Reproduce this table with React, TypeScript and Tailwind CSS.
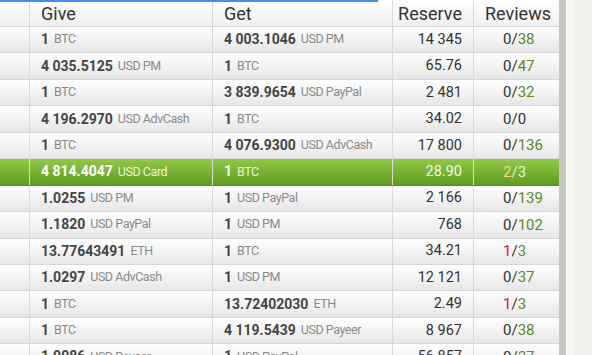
type Row = {
  give: [string, string];
  get: [string, string];
  reserve: string;
  neg: number;
  pos: number;
  active?: boolean;
};

const rows: Row[] = [
  { give: ["1", "BTC"], get: ["4 003.1046", "USD PM"], reserve: "14 345", neg: 0, pos: 38 },
  { give: ["4 035.5125", "USD PM"], get: ["1", "BTC"], reserve: "65.76", neg: 0, pos: 47 },
  { give: ["1", "BTC"], get: ["3 839.9654", "USD PayPal"], reserve: "2 481", neg: 0, pos: 32 },
  { give: ["4 196.2970", "USD AdvCash"], get: ["1", "BTC"], reserve: "34.02", neg: 0, pos: 0 },
  { give: ["1", "BTC"], get: ["4 076.9300", "USD AdvCash"], reserve: "17 800", neg: 0, pos: 136 },
  { give: ["4 814.4047", "USD Card"], get: ["1", "BTC"], reserve: "28.90", neg: 2, pos: 3, active: true },
  { give: ["1.0255", "USD PM"], get: ["1", "USD PayPal"], reserve: "2 166", neg: 0, pos: 139 },
  { give: ["1.1820", "USD PayPal"], get: ["1", "USD PM"], reserve: "768", neg: 0, pos: 102 },
  { give: ["13.77643491", "ETH"], get: ["1", "BTC"], reserve: "34.21", neg: 1, pos: 3 },
  { give: ["1.0297", "USD AdvCash"], get: ["1", "USD PM"], reserve: "12 121", neg: 0, pos: 37 },
  { give: ["1", "BTC"], get: ["13.72402030", "ETH"], reserve: "2.49", neg: 1, pos: 3 },
  { give: ["1", "BTC"], get: ["4 119.5439", "USD Payeer"], reserve: "8 967", neg: 0, pos: 38 },
  { give: ["1.0086", "USD Payeer"], get: ["1", "USD PayPal"], reserve: "56 857", neg: 0, pos: 27 },
];

const grid = "grid grid-cols-[30px_183px_180px_81px_85px]";

function Amount({ value, active }: { value: [string, string]; active?: boolean }) {
  return (
    <div className="flex items-center px-[11px] border-r border-[#d9d9d9] whitespace-nowrap">
      <span className={active ? "text-[14px] font-bold text-white" : "text-[14px] font-bold text-[#454545]"}>
        {value[0]}
      </span>
      <span
        className={
          active
            ? "ml-[5px] text-[12.5px] tracking-[-0.45px] text-[#eaf5d9]"
            : "ml-[5px] text-[12.5px] tracking-[-0.45px] text-[#8a8a8a]"
        }
      >
        {value[1]}
      </span>
    </div>
  );
}

function ExchangeRow({ row }: { row: Row }) {
  const bg = row.active
    ? "bg-gradient-to-b from-[#93c847] to-[#5f9b1f] border-[#5a8f1e]"
    : "bg-gradient-to-b from-[#ffffff] to-[#e7e7e7] border-[#d6d6d6]";
  return (
    <div className={`${grid} h-[26.45px] border-b ${bg}`}>
      <div className="border-r border-[#d9d9d9]" />
      <Amount value={row.give} active={row.active} />
      <Amount value={row.get} active={row.active} />
      <div
        className={
          row.active
            ? "flex items-center justify-end pr-[11px] border-r border-[#d9d9d9] text-[14.5px] text-[#f3f9e8]"
            : "flex items-center justify-end pr-[11px] border-r border-[#d9d9d9] text-[14.5px] text-[#333]"
        }
      >
        {row.reserve}
      </div>
      <div className="flex items-center pl-[29px] text-[15px]">
        {row.active ? (
          <>
            <span className="text-[#e9d88a]">{row.neg}</span>
            <span className="text-[#e6f2d3]">/{row.pos}</span>
          </>
        ) : (
          <>
            <span className={row.neg > 0 ? "text-[#d3143c]" : "text-[#333]"}>{row.neg}</span>
            <span className="text-[#333]">/</span>
            <span className={row.pos > 0 ? "text-[#5b8a1f]" : "text-[#333]"}>{row.pos}</span>
          </>
        )}
      </div>
    </div>
  );
}

export default function App() {
  return (
    <div className="relative flex h-[355px] w-[592px] overflow-hidden bg-[#f2f2ee] font-['Roboto',sans-serif]">
      <div className="absolute left-0 top-0 h-[2px] w-[378px] bg-[#4a8cf0]" />
      <div className="w-[559px] shrink-0">
        <div className={`${grid} h-[27px] border-b border-[#d6d6d6] bg-gradient-to-b from-[#ffffff] to-[#f0f0f0] text-[18px] text-[#333]`}>
          <div className="border-r border-[#d9d9d9]" />
          <div className="flex items-center px-[11px] border-r border-[#d9d9d9]">Give</div>
          <div className="flex items-center px-[11px] border-r border-[#d9d9d9]">Get</div>
          <div className="flex items-center justify-end pr-[11px] border-r border-[#d9d9d9]">Reserve</div>
          <div className="flex items-center pl-[11px]">Reviews</div>
        </div>
        {rows.map((row, idx) => (
          <ExchangeRow row={row} key={idx} />
        ))}
      </div>
      <div className="w-[7px] shrink-0 bg-[#c6c6c4]" />
      <div className="w-[8px] shrink-0 bg-[#f7f7f4]" />
      <div className="flex-1 bg-[#f1f1ec]" />
    </div>
  );
}
